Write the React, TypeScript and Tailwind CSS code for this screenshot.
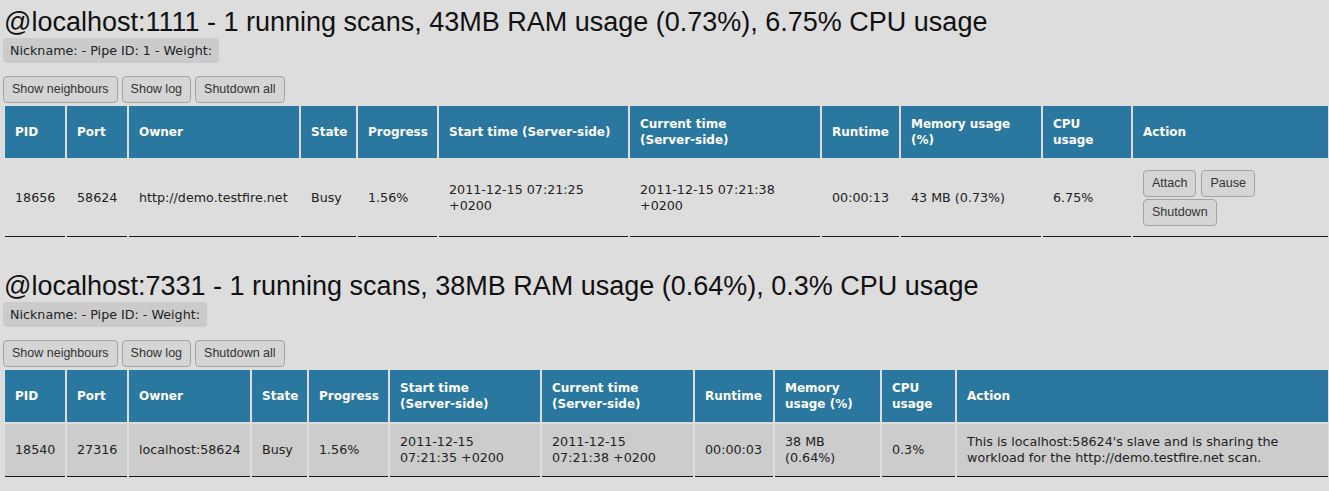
const body = "font-['DejaVu_Sans',Verdana,sans-serif]";
const arial = "font-['Liberation_Sans',Arial,sans-serif]";

type Col = { label: React.ReactNode; width: number };

function Btn({ children }: { children: React.ReactNode }) {
  return (
    <button
      className={`${arial} text-[12.5px] text-[#333] bg-[#d5d5d5] border border-[#a3a3a3] rounded-[4px] px-[8px] h-[27px] leading-none`}
    >
      {children}
    </button>
  );
}

const ss = <span className="whitespace-nowrap">(Server-side)</span>;

function Instance({
  title,
  meta,
  cols,
  row,
  rowBg,
  action,
  top,
}: {
  title: string;
  meta: string;
  cols: Col[];
  row: React.ReactNode[];
  rowBg: string;
  action: React.ReactNode;
  top: string;
}) {
  const td = `${rowBg} text-[#222] text-[12.7px] leading-[16px] align-middle px-[10px] py-[10px] border-b border-[#1a1a1a]`;
  return (
    <section className={top}>
      <h1 className={`${arial} text-[27px] leading-[30px] text-[#111] pl-[4px]`}>{title}</h1>
      <div className={`${body} inline-block ml-[3px] bg-[#cbcbcb] rounded-[4px] px-[7px] h-[25px] leading-[25px] text-[12.7px] text-[#222]`}>
        {meta}
      </div>
      <div className="flex gap-[4px] ml-[3px] mt-[13px]">
        <Btn>Show neighbours</Btn>
        <Btn>Show log</Btn>
        <Btn>Shutdown all</Btn>
      </div>
      <table className={`${body} table-fixed border-separate border-spacing-[2px] ml-[3px] mt-[1px] w-[1326px]`}>
        <colgroup>
          {cols.map((c, i) => (
            <col key={i} style={{ width: c.width }} />
          ))}
        </colgroup>
        <thead>
          <tr>
            {cols.map((c, i) => (
              <th
                key={i}
                className="bg-[#2a77a0] text-white text-[12px] leading-[16px] font-bold text-left align-middle px-[10px] py-[10px] h-[52px]"
              >
                {c.label}
              </th>
            ))}
          </tr>
        </thead>
        <tbody>
          <tr>
            {row.map((v, i) => (
              <td key={i} className={td}>
                {v}
              </td>
            ))}
            <td className={td}>{action}</td>
          </tr>
        </tbody>
      </table>
    </section>
  );
}

export default function App() {
  const cols1: Col[] = [
    { label: "PID", width: 60 },
    { label: "Port", width: 60 },
    { label: "Owner", width: 170 },
    { label: "State", width: 55 },
    { label: "Progress", width: 79 },
    { label: <>Start time {ss}</>, width: 189 },
    { label: <>Current time {ss}</>, width: 190 },
    { label: "Runtime", width: 77 },
    { label: "Memory usage (%)", width: 140 },
    { label: "CPU usage", width: 88 },
    { label: "Action", width: 195 },
  ];
  const cols2: Col[] = [
    { label: "PID", width: 60 },
    { label: "Port", width: 60 },
    { label: "Owner", width: 121 },
    { label: "State", width: 55 },
    { label: "Progress", width: 79 },
    { label: <>Start time {ss}</>, width: 150 },
    { label: <>Current time {ss}</>, width: 151 },
    { label: "Runtime", width: 78 },
    { label: "Memory usage (%)", width: 105 },
    { label: "CPU usage", width: 73 },
    { label: "Action", width: 371 },
  ];

  return (
    <main className="bg-[#dddddd] min-h-screen w-[1329px] overflow-hidden">
      <Instance
        top="pt-[7px]"
        title="@localhost:1111 - 1 running scans, 43MB RAM usage (0.73%), 6.75% CPU usage"
        meta="Nickname: - Pipe ID: 1 - Weight:"
        cols={cols1}
        rowBg="bg-[#dddddd] h-[75px]"
        row={[
          "18656",
          "58624",
          "http://demo.testfire.net",
          "Busy",
          "1.56%",
          "2011-12-15 07:21:25 +0200",
          "2011-12-15 07:21:38 +0200",
          "00:00:13",
          "43 MB (0.73%)",
          "6.75%",
        ]}
        action={
          <div className="flex flex-wrap gap-x-[5px] gap-y-[2px]">
            <Btn>Attach</Btn>
            <Btn>Pause</Btn>
            <Btn>Shutdown</Btn>
          </div>
        }
      />
      <Instance
        top="pt-[32px]"
        title="@localhost:7331 - 1 running scans, 38MB RAM usage (0.64%), 0.3% CPU usage"
        meta="Nickname: - Pipe ID: - Weight:"
        cols={cols2}
        rowBg="bg-[#cccccc] h-[52px]"
        row={[
          "18540",
          "27316",
          "localhost:58624",
          "Busy",
          "1.56%",
          "2011-12-15 07:21:35 +0200",
          "2011-12-15 07:21:38 +0200",
          "00:00:03",
          "38 MB (0.64%)",
          "0.3%",
        ]}
        action="This is localhost:58624's slave and is sharing the workload for the http://demo.testfire.net scan."
      />
    </main>
  );
}
